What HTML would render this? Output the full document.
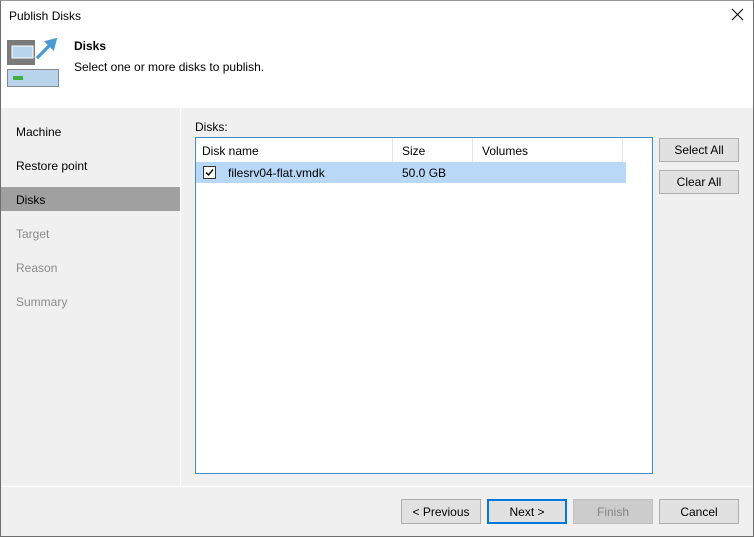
<!DOCTYPE html>
<html><head><style>
*{margin:0;padding:0;box-sizing:border-box}
body{width:754px;height:537px;position:relative;overflow:hidden;font-family:"Liberation Sans",sans-serif;font-size:12px;color:#000;background:#f0f0f0}
.a{position:absolute}
.btn{position:absolute;background:#e1e1e1;border:1px solid #adadad;text-align:center;line-height:22px;font-size:12px}
.nav{position:absolute;left:16px;font-size:12px}
</style></head><body>
<div class="a" style="left:0;top:0;width:754px;height:537px;border:1px solid #6e6e6e;border-top:1px solid #999"></div>
<div class="a" style="left:1px;top:1px;width:752px;height:107px;background:#fff"></div>
<div class="a" style="left:9px;top:9px">Publish Disks</div>
<svg class="a" style="left:731px;top:8px" width="14" height="14"><path d="M1 1L12 12M12 1L1 12" stroke="#000" stroke-width="1"/></svg>
<svg class="a" style="left:0;top:30px" width="70" height="60">
<rect x="7" y="10" width="28" height="25" fill="#7a7a7a"/>
<rect x="12" y="16" width="21" height="12" fill="#b9d5ee" stroke="#fff" stroke-width="1"/>
<path d="M35 27L47 15L43 11L58 7L54 22L50 18L38 30Z" fill="#4a9ad4" stroke="#fff" stroke-width="1"/>
<rect x="7.5" y="39.5" width="51" height="17" fill="#b9d5ee" stroke="#888"/>
<rect x="13" y="46" width="10" height="4" fill="#40b040"/>
</svg>
<div class="a" style="left:74px;top:39px;font-weight:bold">Disks</div>
<div class="a" style="left:74px;top:60px">Select one or more disks to publish.</div>
<div class="a" style="left:180px;top:108px;width:1px;height:378px;background:#fff"></div>
<div class="a" style="left:1px;top:486px;width:752px;height:1px;background:#fff"></div>
<div class="nav" style="top:125px">Machine</div>
<div class="nav" style="top:159px">Restore point</div>
<div class="a" style="left:1px;top:187px;width:179px;height:24px;background:#a0a0a0"></div>
<div class="nav" style="top:193px">Disks</div>
<div class="nav" style="top:227px;color:#8a8a8a">Target</div>
<div class="nav" style="top:261px;color:#8a8a8a">Reason</div>
<div class="nav" style="top:295px;color:#8a8a8a">Summary</div>
<div class="a" style="left:195px;top:120px">Disks:</div>
<div class="a" style="left:195px;top:137px;width:458px;height:337px;background:#fff;border:1px solid #3f8ec2"></div>
<div class="a" style="left:392px;top:138px;width:1px;height:24px;background:#e5e5e5"></div>
<div class="a" style="left:472px;top:138px;width:1px;height:24px;background:#e5e5e5"></div>
<div class="a" style="left:622px;top:138px;width:1px;height:24px;background:#e5e5e5"></div>
<div class="a" style="left:202px;top:144px">Disk name</div>
<div class="a" style="left:402px;top:144px">Size</div>
<div class="a" style="left:482px;top:144px">Volumes</div>
<div class="a" style="left:196px;top:162px;width:430px;height:21px;background:#b9d8f7"></div>
<div class="a" style="left:203px;top:166px;width:13px;height:13px;background:#fff;border:1px solid #333"></div>
<svg class="a" style="left:203px;top:166px" width="13" height="13"><path d="M3 6.5L5.5 9L10 3.5" stroke="#000" stroke-width="1.4" fill="none"/></svg>
<div class="a" style="left:228px;top:166px">filesrv04-flat.vmdk</div>
<div class="a" style="left:402px;top:166px">50.0 GB</div>
<div class="btn" style="left:659px;top:138px;width:80px;height:24px">Select All</div>
<div class="btn" style="left:659px;top:170px;width:80px;height:24px">Clear All</div>
<div class="btn" style="left:401px;top:499px;width:80px;height:25px;line-height:24px">&lt; Previous</div>
<div class="btn" style="left:487px;top:499px;width:80px;height:25px;border:2px solid #0078d7;line-height:22px">Next &gt;</div>
<div class="btn" style="left:573px;top:499px;width:80px;height:25px;background:#ccc;border-color:#bfbfbf;color:#838383;line-height:24px">Finish</div>
<div class="btn" style="left:659px;top:499px;width:80px;height:25px;line-height:24px">Cancel</div>
</body></html>
